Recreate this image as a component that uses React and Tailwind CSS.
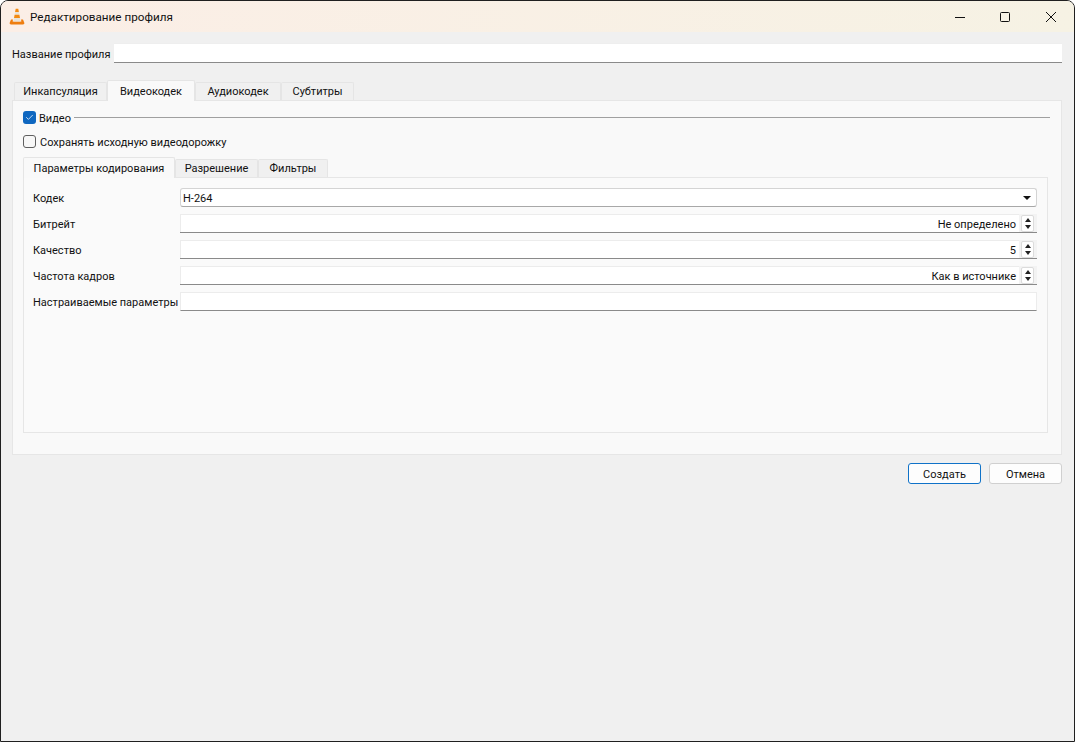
import React from "react";
import { Check } from "lucide-react";

const outerTabs = [
  { label: "Инкапсуляция", w: "w-[93px]" },
  { label: "Видеокодек", w: "w-[88px]", active: true },
  { label: "Аудиокодек", w: "w-[86px]" },
  { label: "Субтитры", w: "w-[73px]" },
];

const innerTabs = [
  { label: "Параметры кодирования", w: "w-[152px]", active: true },
  { label: "Разрешение", w: "w-[83px]" },
  { label: "Фильтры", w: "w-[70px]" },
];

const VlcCone = () => (
  <svg width="16" height="17" viewBox="0 0 16 17" className="shrink-0">
    <path d="M2 11.5 L4 11.5 L3.6 13.5 L12.4 13.5 L12 11.5 L14 11.5 L15.4 15 Q15.6 16.4 14 16.4 L2 16.4 Q0.4 16.4 0.6 15 Z" fill="#ee7d0f" />
    <path d="M6.7 0.8 L9.3 0.8 L9.9 4 L6.1 4 Z" fill="#f28a12" />
    <path d="M6.1 4 L9.9 4 L10.4 6.8 L5.6 6.8 Z" fill="#e8e2d8" />
    <path d="M5.6 6.8 L10.4 6.8 L11 10 L5 10 Z" fill="#f28a12" />
    <path d="M5 10 L11 10 L11.6 13.5 L4.4 13.5 Z" fill="#e8e2d8" />
  </svg>
);

const Tab = ({ label, w, active }) => (
  <div
    className={`${w} flex items-center justify-center border border-b-0 border-[#e5e5e5] rounded-t-[2px] ${
      active ? "h-[21px] bg-[#f9f9f9] relative top-px" : "h-[18px] bg-[#f0f0f0]"
    }`}
  >
    {label}
  </div>
);

const Spinner = () => (
  <div className="w-[13px] h-[17px] ml-[2px] mr-[3px] bg-white border border-[#dcdcdc] rounded-[2px] flex flex-col items-center justify-center gap-[3px] shrink-0">
    <span className="w-0 h-0 border-x-[3.5px] border-x-transparent border-b-[4px] border-b-[#222]" />
    <span className="w-0 h-0 border-x-[3.5px] border-x-transparent border-t-[4px] border-t-[#222]" />
  </div>
);

const SpinRow = ({ label, value }) => (
  <div className="flex items-center h-[19px]">
    <div className="w-[147px] shrink-0 pt-[2px]">{label}</div>
    <div className="flex-1 flex items-center h-[19px] bg-[#f3f3f3] border-b border-[#8a8a8a]">
      <div className="flex-1 h-full bg-white flex items-center justify-end pt-[2px] pr-[3px] border-t border-l border-[#ececec]">{value}</div>
      <Spinner />
    </div>
  </div>
);

export default function App() {
  return (
    <div className="w-[1075px] h-[742px] bg-[#f0f0f0] border border-[#1f1f1f] rounded-t-[8px] overflow-hidden flex flex-col text-[11px] leading-none text-[#111] font-['Roboto',sans-serif]">
      {/* title bar */}
      <div className="h-[31px] shrink-0 flex items-center bg-gradient-to-r from-[#fbeee6] to-[#f6f2e4]">
        <div className="ml-[8px]">
          <VlcCone />
        </div>
        <span className="ml-[5px] pt-[2px] text-[11.7px]">Редактирование профиля</span>
        <div className="ml-auto flex items-center mr-[18px]">
          <svg width="10" height="10" viewBox="0 0 10 10" stroke="#111" fill="none">
            <path d="M0 5.5 H10" />
          </svg>
          <svg width="10" height="10" viewBox="0 0 10 10" stroke="#111" fill="none" className="ml-[35px]">
            <rect x="0.5" y="0.5" width="9" height="9" rx="1" />
          </svg>
          <svg width="10" height="10" viewBox="0 0 10 10" stroke="#111" fill="none" className="ml-[36px]">
            <path d="M0 0 L10 10 M10 0 L0 10" />
          </svg>
        </div>
      </div>

      <div className="flex-1 pl-[11px] pr-[12px] pt-[11px]">
        {/* profile name */}
        <div className="flex items-center h-[20px]">
          <span className="w-[102px] shrink-0 pt-[2px] whitespace-nowrap">Название профиля</span>
          <div className="flex-1 h-[20px] bg-white border-b border-[#8a8a8a] border-t border-t-[#eeeeee]" />
        </div>

        {/* outer tabs */}
        <div className="flex items-end h-[20px] mt-[17px] pl-[2px] relative z-10">
          {outerTabs.map((t) => (
            <Tab key={t.label} {...t} />
          ))}
        </div>

        {/* outer pane */}
        <div className="h-[355px] bg-[#f9f9f9] border border-[#e6e6e6] pt-[10px] pl-[10px] pr-[13px] w-[1050px]">
          <div className="flex items-center h-[13px]">
            <div className="w-[13px] h-[13px] bg-[#0f67c0] rounded-[3px] flex items-center justify-center shrink-0">
              <Check size={9} strokeWidth={2} className="text-white" />
            </div>
            <span className="ml-[3px] pt-[2px]">Видео</span>
            <div className="flex-1 ml-[3px] -mr-[2px] h-px bg-[#a0a0a0]" />
          </div>
          <div className="flex items-center h-[13px] mt-[11px]">
            <div className="w-[13px] h-[13px] bg-[#f7f7f7] border border-[#5f5f5f] rounded-[3px] shrink-0" />
            <span className="ml-[4px] pt-[2px]">Сохранять исходную видеодорожку</span>
          </div>

          {/* inner tabs */}
          <div className="flex items-end h-[20px] mt-[9px] relative z-10">
            {innerTabs.map((t) => (
              <Tab key={t.label} {...t} />
            ))}
          </div>

          {/* inner pane */}
          <div className="h-[256px] bg-[#fafafa] border border-[#e6e6e6] pl-[9px] pr-[10px] pt-[10px] flex flex-col gap-[7px]">
            <div className="flex items-center h-[19px]">
              <div className="w-[147px] shrink-0 pt-[2px]">Кодек</div>
              <div className="flex-1 h-[19px] bg-white border border-[#d4d4d4] border-b-[#a8a8a8] rounded-[3px] flex items-center pl-[2px] pr-[5px]">
                <span className="pt-[2px]">H-264</span>
                <span className="ml-auto w-0 h-0 border-x-[4px] border-x-transparent border-t-[4px] border-t-[#111]" />
              </div>
            </div>
            <SpinRow label="Битрейт" value="Не определено" />
            <SpinRow label="Качество" value="5" />
            <SpinRow label="Частота кадров" value="Как в источнике" />
            <div className="flex items-center h-[19px]">
              <div className="w-[147px] shrink-0 pt-[2px] whitespace-nowrap">Настраиваемые параметры</div>
              <div className="flex-1 h-[19px] bg-white border border-[#ececec] border-b-[#8a8a8a]" />
            </div>
          </div>
        </div>

        {/* buttons */}
        <div className="flex justify-end gap-[8px] mt-[8px]">
          <button className="w-[73px] h-[21px] pt-[2px] bg-[#fdfdfd] border border-[#0f72c8] rounded-[3px]">Создать</button>
          <button className="w-[73px] h-[21px] pt-[2px] bg-[#fdfdfd] border border-[#d0d0d0] rounded-[3px]">Отмена</button>
        </div>
      </div>
    </div>
  );
}
